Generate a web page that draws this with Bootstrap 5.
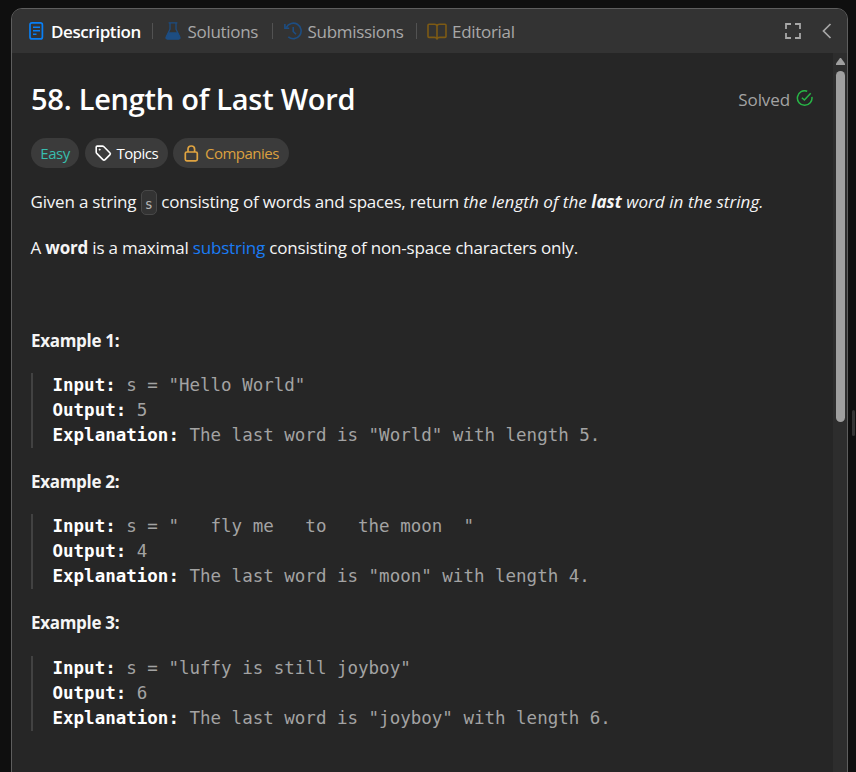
<!DOCTYPE html>
<html lang="en" data-bs-theme="dark">
<head>
<meta charset="utf-8">
<meta name="viewport" content="width=device-width, initial-scale=1">
<title>58. Length of Last Word</title>
<link href="https://cdn.jsdelivr.net/npm/bootstrap@5.3.0/dist/css/bootstrap.min.css" rel="stylesheet">
<style>
html,body{height:100%}
body{background:#0f0f0f;color:#f5f5f5;font-family:"Open Sans","Noto Sans",sans-serif;font-size:17px;line-height:26px;letter-spacing:-.4px;overflow:hidden}
svg{display:block;flex:none;fill:none}
.panel{margin:8px 0 0 11px;width:837px;height:776px;border:1px solid #5e5e5e;border-radius:11px;background:#262626;overflow:hidden}
.panel-head{height:44px;background:#333;color:#a8a8a8;padding:0 15px 0 17px;flex:none}
.tab{height:24px;white-space:nowrap;letter-spacing:-.3px}
.tab span{padding-top:1px}
.tab-on{color:#fff;font-weight:600;letter-spacing:-.4px}
.sep{width:1px;height:16px;background:#525252}
.t1{margin-left:7px;width:101px}
.t2{margin-left:6.5px;width:84.5px}
.t3{margin-left:5.5px;width:108.5px}
.t4{margin-left:5px}
.s1{margin-right:12px}
.s2{margin-right:11px}
.s3{margin-right:10px}
.tools{gap:20px}
.doc{padding:28px 19px 0 19px;min-width:0}
.title{font-size:29px;line-height:36px;font-weight:600;letter-spacing:-.25px;white-space:nowrap}
.solved{color:#a3a3a3;letter-spacing:-.1px}
.solved>span{margin-right:6px;padding-top:1px}
.pills{gap:5.5px;margin-top:21px}
.pill{height:30px;background:#3b3b3b;font-size:15px;letter-spacing:-.5px;line-height:30px;white-space:nowrap}
.p1{width:48px;color:#38bdae;text-align:center}
.p2{width:83px;padding-left:10px;gap:5px;color:#fff}
.p3{width:116px;padding-left:11px;gap:6px;color:#dca03f}
.txt{white-space:nowrap;height:26px;margin:0 0 0 -.5px;letter-spacing:-.19px}
.txt em{letter-spacing:.06px}
.l1{margin-top:21px}
.l2{margin-top:20px;margin-bottom:67px}
.key{display:inline-block;font:13.5px/22px "DejaVu Sans Mono",monospace;letter-spacing:0;color:#b8b8b8;background:#333;border:1px solid #484848;border-radius:5px;width:16px;height:25px;text-align:center;vertical-align:top;margin:1px .25px 0;padding:2px 0 0}
.blue{color:#1a7cf5}
.ex-title{font-weight:700;height:26px;letter-spacing:-.3px}
.sample{margin:19px 0 21.15px;padding-left:19.5px;border-left:2px solid #424242;font:17.5px/25px "DejaVu Sans Mono",monospace;letter-spacing:0;color:#a3a3a3;height:75px;overflow:visible}
.sample:last-child{margin-top:19.6px}
.sample b{color:#fff}
.rail{width:14px;background:#2d2d2d;padding-top:5px}
.thumb{width:9px;height:351px;border-radius:5px;background:#9f9f9f;margin-top:6px}
.grip{width:3px;height:26px;border-radius:2px;background:#353535;margin:410px 0 0 4px}
</style>
</head>
<body class="d-flex align-items-start">
<main class="panel d-flex flex-column flex-shrink-0">
  <header class="panel-head d-flex align-items-center justify-content-between">
    <nav class="d-flex align-items-center">
      <div class="tab tab-on d-flex align-items-center">
        <svg width="15" height="18" viewBox="0 0 15 18" stroke="#087ff5" stroke-width="1.7"><rect x="1" y=".9" width="12.4" height="16" rx="2"/><path d="M4 5.2h7M4 8.7h7M4 12.2h3.5" stroke-width="1.4"/></svg>
        <span class="t1">Description</span>
      </div>
      <i class="sep s1"></i>
      <div class="tab d-flex align-items-center">
        <svg width="16" height="18" viewBox="0 0 16 18" stroke="#1d4d82" stroke-width="1.3"><path d="M3.600 .9h8.800M5 .9v6.300L1.200 15q-.8 2 1.300 2h11q2.100 0 1.300-2L11 7.200V.9"/><path d="M3.500 11h9l1.900 4q.6 1.700-1 1.700H2.600q-1.600 0-1-1.700z" fill="#1d4d82"/></svg>
        <span class="t2">Solutions</span>
      </div>
      <i class="sep s2"></i>
      <div class="tab d-flex align-items-center">
        <svg width="18" height="18" viewBox="0 0 18 18" stroke="#1d4d82" stroke-width="1.6"><path d="M2.400 5.300A7.800 7.800 0 1 1 4.300 14.900M.9 2v4.200h4.300M9.200 5v4.500l2.800 2.800"/></svg>
        <span class="t3">Submissions</span>
      </div>
      <i class="sep s3"></i>
      <div class="tab d-flex align-items-center">
        <svg width="20" height="17" viewBox="0 0 20 17" stroke="#7d5a14" stroke-width="1.600"><path d="M10 3Q9.500 1.200 7.500 1.200H2Q1 1.200 1 2.200V13.500Q1 14.400 2 14.400H7.500Q9.500 14.400 10 15.700Q10.500 14.400 12.500 14.400H18Q19 14.400 19 13.500V2.200Q19 1.200 18 1.200H12.500Q10.500 1.200 10 3V15.500"/></svg>
        <span class="t4">Editorial</span>
      </div>
    </nav>
    <div class="d-flex align-items-center tools">
      <svg width="18" height="18" viewBox="0 0 18 18" stroke="currentColor" stroke-width="1.800"><path d="M3 7V2h5M12 2h5v5M17 11v5h-5M8 16H3v-5"/></svg>
      <svg width="11" height="18" viewBox="0 0 11 18" stroke="currentColor" stroke-width="1.700"><path d="M9.500 2L2.500 9l7 7"/></svg>
    </div>
  </header>
  <div class="d-flex flex-grow-1">
    <section class="doc flex-grow-1">
      <div class="d-flex justify-content-between">
        <h1 class="title m-0">58. Length of Last Word</h1>
        <div class="solved d-flex align-items-center">
          <span>Solved</span>
          <svg width="18" height="18" viewBox="0 0 18 18" stroke="#28b446" stroke-width="1.500"><path d="M11.200 1.200A7.300 7.300 0 1 0 15.900 6.900M5.900 7.700l2.500 2.300L14.700 3.300"/></svg>
        </div>
      </div>
      <div class="pills d-flex">
        <span class="pill p1 rounded-pill">Easy</span>
        <span class="pill p2 rounded-pill d-flex align-items-center">
          <svg width="17" height="17" viewBox="0 0 17 17" stroke="#fff" stroke-width="1.600"><path d="M1.200 2.100Q1.200 1.100 2.200 1.100H7.400Q8.200 1.100 8.900 1.800L14.800 7.700Q15.900 8.800 14.800 9.900L10.100 14.600Q9 15.700 7.900 14.600L2 8.700Q1.200 8 1.200 7.200Z"/><circle cx="4.700" cy="4.600" r=".7" fill="#fff" stroke-width=".6"/></svg>
          <span>Topics</span>
        </span>
        <span class="pill p3 rounded-pill d-flex align-items-center">
          <svg width="15" height="17" viewBox="0 0 15 17" stroke="#e0a441" stroke-width="1.700"><rect x="1.300" y="7" width="12" height="8.800" rx="1.500"/><path d="M4 7V4.200Q4 1 7.300 1t3.300 3.200V7"/></svg>
          <span>Companies</span>
        </span>
      </div>
      <p class="txt l1">Given a string <code class="key">s</code> consisting of words and spaces, return <em>the length of the <b>last</b> word in the string.</em></p>
      <p class="txt l2">A <b>word</b> is a maximal <span class="blue">substring</span> consisting of non-space characters only.</p>
      <div class="ex-title">Example 1:</div>
<pre class="sample"><b>Input:</b> s = "Hello World"
<b>Output:</b> 5
<b>Explanation:</b> The last word is "World" with length 5.</pre>
      <div class="ex-title">Example 2:</div>
<pre class="sample"><b>Input:</b> s = "   fly me   to   the moon  "
<b>Output:</b> 4
<b>Explanation:</b> The last word is "moon" with length 4.</pre>
      <div class="ex-title">Example 3:</div>
<pre class="sample"><b>Input:</b> s = "luffy is still joyboy"
<b>Output:</b> 6
<b>Explanation:</b> The last word is "joyboy" with length 6.</pre>
    </section>
    <aside class="rail d-flex flex-column align-items-center flex-shrink-0">
      <svg width="9" height="7" viewBox="0 0 9 7"><path d="M4 0h1l4 5.500V7H0V5.500z" fill="#9f9f9f"/></svg>
      <div class="thumb"></div>
    </aside>
  </div>
</main>
<div class="grip flex-shrink-0"></div>
<script src="https://cdn.jsdelivr.net/npm/bootstrap@5.3.0/dist/js/bootstrap.bundle.min.js"></script>
</body>
</html>
